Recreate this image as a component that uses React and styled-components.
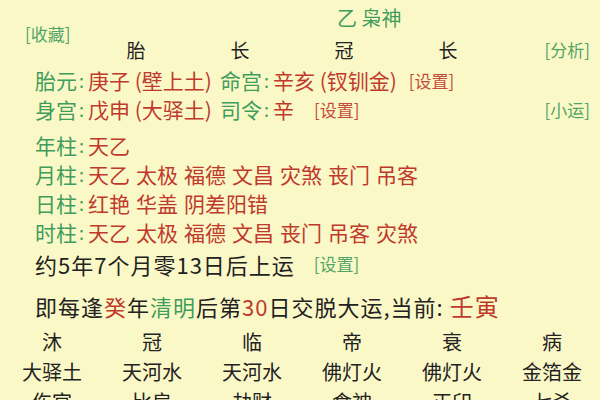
import React from "react";
import styled, { createGlobalStyle } from "styled-components";

const GREEN = "#3f9d5c";
const RED = "#bf3a2c";
const INK = "#222";

const Global = createGlobalStyle`
  html, body { margin: 0; padding: 0; background: #fbf8c7; }
  body { font-family: "Noto Sans CJK SC", "Noto Sans", sans-serif; }
`;

const Page = styled.div`
  width: 600px;
  height: 400px;
  overflow: hidden;
  background: #fbf8c7;
  color: ${INK};
  display: flex;
  flex-direction: column;
`;

const Title = styled.div`
  margin-top: 8px;
  height: 20px;
  line-height: 20px;
  padding-left: 337px;
  font-size: 20px;
  color: ${GREEN};
`;

const FavRow = styled.div`
  height: 12px;
  line-height: 12px;
  padding-left: 25px;
`;

const Link = styled.span`
  font-size: 17px;
  color: ${(p) => p.$color};
  opacity: 0.9;
  letter-spacing: 0;
  margin-left: ${(p) => p.$gap || 0}px;
  white-space: nowrap;
`;

const HeaderRow = styled.div`
  height: 20px;
  line-height: 20px;
  display: flex;
  align-items: center;
  padding-left: 84px;
  padding-right: 10px;
`;

const HeadCell = styled.span`
  width: 104px;
  text-align: center;
  font-size: 19px;
  color: ${INK};
`;

const RightLink = styled(Link)`
  margin-left: auto;
`;

const Line = styled.div`
  height: ${(p) => p.$h || 29}px;
  line-height: ${(p) => p.$h || 29}px;
  margin-top: ${(p) => p.$mt || 0}px;
  padding-left: 35px;
  padding-right: 10px;
  display: flex;
  align-items: center;
  font-size: ${(p) => p.$size || 21}px;
  letter-spacing: ${(p) => p.$ls || 0}px;
  white-space: nowrap;
  color: ${INK};
`;

const Label = styled.span`
  color: ${GREEN};
`;

const Colon = styled.span`
  color: ${GREEN};
  font-size: 18px;
  margin: 0 4px 0 2px;
`;

const Val = styled.span`
  color: ${RED};
  margin-right: ${(p) => p.$mr ?? 6}px;
`;

const Hl = styled.span`
  color: ${(p) => p.$color};
  font-size: ${(p) => (p.$size ? `${p.$size}px` : "inherit")};
`;

const Table = styled.div`
  margin-top: 6px;
  display: grid;
  grid-template-columns: repeat(6, 100px);
  padding-left: 2px;
`;

const Cell = styled.div`
  height: 30px;
  line-height: 30px;
  text-align: center;
  font-size: 20px;
  color: ${INK};
`;

const Info = ({ label, children, mt, right }) => (
  <Line $mt={mt}>
    <Label>{label}</Label>
    <Colon>:</Colon>
    {children}
    {right}
  </Line>
);

const shensha = [
  ["年柱", ["天乙"]],
  ["月柱", ["天乙", "太极", "福德", "文昌", "灾煞", "丧门", "吊客"]],
  ["日柱", ["红艳", "华盖", "阴差阳错"]],
  ["时柱", ["天乙", "太极", "福德", "文昌", "丧门", "吊客", "灾煞"]],
];

const table = [
  ["沐", "冠", "临", "帝", "衰", "病"],
  ["大驿土", "天河水", "天河水", "佛灯火", "佛灯火", "金箔金"],
  ["伤官", "比肩", "劫财", "食神", "正印", "七杀"],
];

export default function App() {
  return (
    <Page>
      <Global />
      <Title>乙 枭神</Title>
      <FavRow>
        <Link $color={GREEN}>[收藏]</Link>
      </FavRow>
      <HeaderRow>
        {["胎", "长", "冠", "长"].map((c, i) => (
          <HeadCell key={i}>{c}</HeadCell>
        ))}
        <RightLink $color={GREEN}>[分析]</RightLink>
      </HeaderRow>

      <Info label="胎元" mt={6}>
        <Val $mr={8}>庚子 (壁上土)</Val>
        <Label>命宫</Label>
        <Colon>:</Colon>
        <Val $mr={12}>辛亥 (钗钏金)</Val>
        <Link $color={RED}>[设置]</Link>
      </Info>
      <Info label="身宫" right={<RightLink $color={GREEN}>[小运]</RightLink>}>
        <Val $mr={8}>戊申 (大驿土)</Val>
        <Label>司令</Label>
        <Colon>:</Colon>
        <Val $mr={20}>辛</Val>
        <Link $color={RED}>[设置]</Link>
      </Info>

      {shensha.map(([label, items], i) => (
        <Info key={label} label={label} mt={i === 0 ? 7 : 0}>
          {items.map((t, j) => (
            <Val key={j}>{t}</Val>
          ))}
        </Info>
      ))}

      <Line $h={30} $mt={2} $size={22} $ls={1}>
        约5年7个月零13日后上运
        <Link $color={GREEN} $gap={19}>[设置]</Link>
      </Line>
      <Line $h={30} $mt={12} $size={22} $ls={1}>
        即每逢<Hl $color={RED}>癸</Hl>年<Hl $color={GREEN}>清明</Hl>后第
        <Hl $color={RED}>30</Hl>日交脱大运,当前:&nbsp;
        <Hl $color={RED} $size={24}>壬寅</Hl>
      </Line>

      <Table>
        {table.flat().map((t, i) => (
          <Cell key={i}>{t}</Cell>
        ))}
      </Table>
    </Page>
  );
}
